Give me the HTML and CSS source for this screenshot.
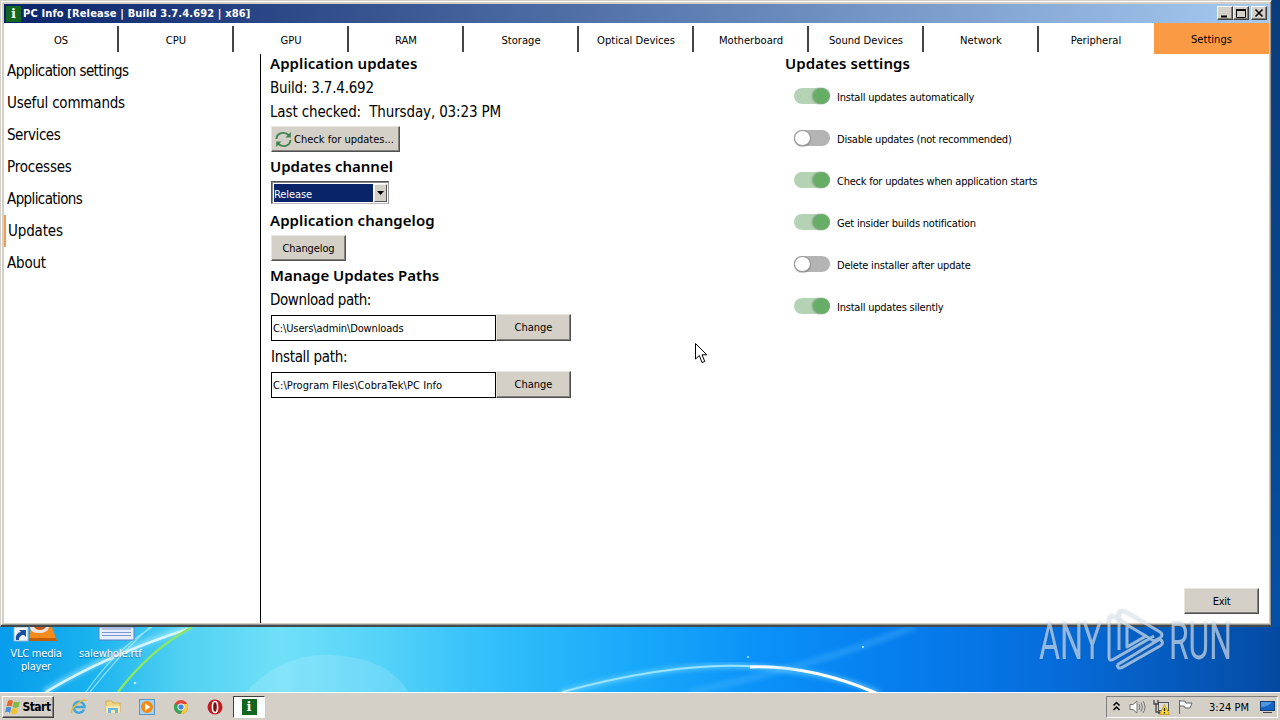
FILE: index.html
```html
<!DOCTYPE html>
<html lang="en">
<head>
<meta charset="utf-8">
<title>PC Info</title>
<link rel="stylesheet" href="styles.css">
</head>
<body>
<div class="desktop">
  <svg class="wallpaper" viewBox="0 0 1280 692" width="1280" height="692">
    <defs>
      <linearGradient id="sky" gradientUnits="userSpaceOnUse" x1="0" y1="0" x2="1280" y2="0">
        <stop offset="0" stop-color="#079cec"/><stop offset=".07" stop-color="#19b2ef"/><stop offset=".14" stop-color="#50d0f2"/><stop offset=".22" stop-color="#70e0f8"/><stop offset=".3" stop-color="#54d2f8"/><stop offset=".38" stop-color="#34c0fa"/><stop offset=".5" stop-color="#18a8fa"/><stop offset=".6" stop-color="#0a90f8"/><stop offset=".7" stop-color="#067eee"/><stop offset=".82" stop-color="#066ddc"/><stop offset="1" stop-color="#044aa2"/>
      </linearGradient>
      <linearGradient id="edge" x1="0" y1="0" x2="0" y2="1"><stop offset="0" stop-color="#0a3c7a"/><stop offset=".6" stop-color="#074690"/><stop offset="1" stop-color="#0450a8"/></linearGradient>
      <filter id="soft"><feGaussianBlur stdDeviation="2"/></filter>
      <filter id="fine"><feGaussianBlur stdDeviation=".5"/></filter>
    </defs>
    <rect width="1280" height="692" fill="url(#sky)"/>
    <rect x="1271" width="9" height="627" fill="url(#edge)"/>
    <path d="M246 692C270 665 300 655 325 655S390 660 408 692Z" fill="#fff" opacity=".14"/>
    <g fill="none">
      <path d="M44 692Q110 652 190 627" stroke="#bff0ff" stroke-width="6" opacity=".5" filter="url(#soft)"/>
      <path d="M46 692Q105 656 188 629" stroke="#e2faff" stroke-width="2.5" opacity=".9" filter="url(#fine)"/>
      <path d="M86 692Q115 650 152 627M90 692Q120 654 150 627" stroke="#c9f6ff" stroke-width="1.3" opacity=".6"/>
      <path d="M118 692Q150 650 192 627" stroke="#8ce860" stroke-width="2.4" filter="url(#fine)"/>
      <path d="M560 693Q680 660 760 667T880 694" stroke="#7fdcff" stroke-width="6" opacity=".5" filter="url(#soft)"/>
      <path d="M562 692Q680 660 760 667" stroke="#9be4ff" stroke-width="2" filter="url(#fine)"/>
      <path d="M750 667Q810 665 876 693" stroke="#fff" stroke-width="3" filter="url(#fine)"/>
      <path d="M690 692Q820 665 915 626" stroke="#58c0ff" stroke-width="7" opacity=".3" filter="url(#soft)"/>
    </g>
    <g fill="#b9ecff"><circle cx="748" cy="657" r=".9"/><circle cx="863" cy="647" r="1.1"/><circle cx="135" cy="683" r="1.3"/></g>
  </svg>

  <div class="shortcut shortcut-vlc">
    <svg width="46" height="20" viewBox="0 0 46 20">
      <path d="M18 0H39L44 14H16Z" fill="#f28a1c"/><path d="M16 11H43L44 14H16Z" fill="#c25e08"/><path d="M17 0H36Q35 6 26 6T17 0Z" fill="#efe4dc"/><path d="M21 0H33Q31 3 27 3T21 0Z" fill="#c8551c"/>
      <rect x="1" y="0" width="14" height="14" fill="#f4f8fc" stroke="#98b6d0"/><path d="M3 13C2 8 5 5 8 5L6 3H13V10L11 8C8 8 6 10 6 13Z" fill="#1c4f9c"/>
    </svg>
    <span>VLC media<br>player</span>
  </div>
  <div class="shortcut shortcut-rtf">
    <svg width="38" height="20" viewBox="0 0 38 20"><path d="M1 0H36V13H1Z" fill="#e6eefb" stroke="#5b7fc0"/><path d="M4 2H33M4 5.500H33M4 8.500H33" stroke="#7a97cf"/></svg>
    <span>salewhole.rtf</span>
  </div>

  <div class="window">
    <div class="titlebar">
      <span class="app-icon">i</span>
      <span class="title">PC Info [Release | Build 3.7.4.692 | x86]</span>
      <span class="caption"><svg width="15" height="13"><path d="M3 9.500H9" stroke="#000" stroke-width="2"/></svg></span>
      <span class="caption"><svg width="15" height="13"><path d="M2.500 2.500H11.500V10.500H2.500ZM2 2.500H12" fill="none" stroke="#000"/><path d="M2 3H12" stroke="#000" stroke-width="2"/></svg></span>
      <span class="caption caption-close"><svg width="15" height="13"><path d="M3.500 2.500L10.500 9.500M10.500 2.500L3.500 9.500" stroke="#000" stroke-width="1.600"/></svg></span>
    </div>
    <nav class="tabs">
      <span class="tab">OS</span><span class="tab">CPU</span><span class="tab">GPU</span><span class="tab">RAM</span><span class="tab">Storage</span><span class="tab">Optical Devices</span><span class="tab">Motherboard</span><span class="tab">Sound Devices</span><span class="tab">Network</span><span class="tab">Peripheral</span><span class="tab active">Settings</span>
    </nav>
    <div class="body">
      <ul class="sidebar">
        <li class="tight">Application settings</li><li class="loose">Useful commands</li><li>Services</li><li class="loose">Processes</li><li class="tight">Applications</li><li class="current">Updates</li><li class="loose">About</li>
      </ul>
      <main class="updates">
        <h2 class="first">Application updates</h2>
        <p>Build: 3.7.4.692</p>
        <p class="checked">Last checked:&nbsp; Thursday, 03:23 PM</p>
        <button class="btn check"><svg width="17" height="17" viewBox="0 0 17 17"><g fill="none" stroke="#3f8450" stroke-width="1.900"><path d="M1.500 8C1.500 1.500 10 0 14 4.500"/><path d="M15.500 9C15 15.500 7 17 3 12.500"/></g><path d="M15.800 1V6.500H10.500ZM1.200 16V10.500H6.500Z" fill="#3f8450"/></svg>Check for updates...</button>
        <h2>Updates channel</h2>
        <div class="select"><span class="value">Release</span><span class="drop"><svg width="7" height="4"><path d="M0 0H7L3.500 4Z"/></svg></span></div>
        <h2 class="changelog-title">Application changelog</h2>
        <button class="btn changelog">Changelog</button>
        <h2 class="paths-title">Manage Updates Paths</h2>
        <p class="download">Download path:</p>
        <div class="path"><span class="field">C:\Users\admin\Downloads</span><button class="btn change">Change</button></div>
        <p class="install">Install path:</p>
        <div class="path"><span class="field field-program">C:\Program Files\CobraTek\PC Info</span><button class="btn change">Change</button></div>
      </main>
      <section class="options">
        <h2 class="first">Updates settings</h2>
        <div class="option"><i class="switch on"></i>Install updates automatically</div>
        <div class="option"><i class="switch"></i>Disable updates (not recommended)</div>
        <div class="option"><i class="switch on"></i>Check for updates when application starts</div>
        <div class="option"><i class="switch on"></i>Get insider builds notification</div>
        <div class="option"><i class="switch"></i>Delete installer after update</div>
        <div class="option"><i class="switch on"></i>Install updates silently</div>
        <button class="btn exit">Exit</button>
      </section>
    </div>
  </div>
</div>

<div class="taskbar">
  <button class="btn start"><svg width="16" height="16" viewBox="0 0 16 16"><path d="M3 2Q5 0 8 2L6.500 7.500Q4 6 1.500 7.500Z" fill="#e8642c"/><path d="M9 2.500Q12 4 15 2.500L13.500 8Q10 9.500 7.500 8Z" fill="#7dbb42"/><path d="M1.300 8.500Q4 7 6.300 8.500L5 14Q3 12 0 13.500Z" fill="#4a8ed8"/><path d="M7.300 9Q10 10.500 13.200 9L12 14Q9 16 6 14.500Z" fill="#f5c130"/></svg>Start</button>
  <svg class="quick" width="18" height="18" viewBox="0 0 18 18"><path d="M14 11.500A5.500 5.500 0 1 1 14.500 9H5" fill="none" stroke="#3fa5df" stroke-width="2.500"/><path d="M2 15C-1 11 13 0 16.500 2.500" fill="none" stroke="#e8b93a" stroke-width="1.500"/></svg>
  <svg class="quick" width="18" height="18" viewBox="0 0 18 18"><path d="M2 3H8L9 5H16V14H2Z" fill="#f0d684" stroke="#d4ae4c"/><path d="M2 8H16V15H2Z" fill="#fae9a8"/><path d="M4 15V10H14V15H11V12H7V15Z" fill="#6ab6e2"/></svg>
  <svg class="quick" width="18" height="18" viewBox="0 0 18 18"><rect x="1.500" y="1.500" width="15" height="15" fill="#a7d3f2" stroke="#5598c8"/><circle cx="9" cy="9" r="6" fill="#f28a18"/><path d="M7 5.500L12.500 9L7 12.500Z" fill="#fff"/></svg>
  <svg class="quick" width="18" height="18" viewBox="0 0 18 18"><circle cx="9" cy="9" r="7" fill="#e44534"/><path d="M9 9L2.800 5.500A7 7 0 0 0 8.500 16L12 10.800Z" fill="#35a652"/><path d="M9 6H15.300A7 7 0 0 1 8.500 16L12 10.500Z" fill="#f8cc3c"/><circle cx="9" cy="9" r="3.200" fill="#4285e8" stroke="#fff"/></svg>
  <svg class="quick" width="18" height="18" viewBox="0 0 18 18"><circle cx="9" cy="9" r="7.500" fill="#c21820"/><ellipse cx="9" cy="9" rx="2.600" ry="5.500" fill="#7c0c12" stroke="#fff" stroke-width="1.600"/></svg>
  <span class="running"><span class="app-icon">i</span></span>
  <div class="tray">
    <svg width="9" height="12" viewBox="0 0 9 12"><path d="M1.500 4.500L4.500 1.500L7.500 4.500M1.500 9L4.500 6L7.500 9" fill="none" stroke="#000" stroke-width="1.500"/></svg>
    <svg class="sound" width="17" height="16" viewBox="0 0 17 16"><path d="M1 5.500H4L8 2V14L4 10.500H1Z" fill="#fff" stroke="#777"/><path d="M10 5Q12 8 10 11M12 3.500Q15 8 12 12.500M14 2Q18 8 14 14" fill="none" stroke="#777"/></svg>
    <svg class="net" width="17" height="16" viewBox="0 0 17 16"><rect x="5.500" y="3.500" width="10" height="8" fill="#dcdcdc" stroke="#555"/><path d="M1 1V5H5V1M3 5V13H7M5 14H11" fill="none" stroke="#444" stroke-width="1.300"/><path d="M11.500 5.500L16.500 15.500H6.500Z" fill="#ffd92e" stroke="#b58b00" stroke-width=".7"/><path d="M11.500 9V12M11.500 13V14.500" stroke="#222" stroke-width="1.300"/></svg>
    <svg class="flag" width="17" height="16" viewBox="0 0 17 16"><path d="M2.500 1V15M3 2H8L9 4H15L13 9H8L7 7H3" fill="#fff" stroke="#666"/></svg>
    <span class="clock">3:24 PM</span>
    <svg width="15" height="14" viewBox="0 0 15 14"><rect x=".5" y="1.500" width="14" height="9" fill="#1464c4" stroke="#163c70"/><path d="M1 7Q8 7 12 2H1Z" fill="#5098e0"/><path d="M3 12.500H12" stroke="#444"/></svg>
  </div>
</div>

<svg class="watermark" width="220" height="80" viewBox="0 0 220 80">
  <g class="mark">
    <text x="3" y="54" textLength="63" lengthAdjust="spacingAndGlyphs">ANY</text>
    <text x="133" y="54" textLength="63" lengthAdjust="spacingAndGlyphs">RUN</text>
    <path d="M73 52V14Q74 9 79 12L83 14V45M83 14V8Q85 4 90 7L124 27Q128 30 124 33L118 36L83 15M73 52Q73 57 78 54L118 31M81 60Q82 65 87 62L124 41Q129 38 124 34L81 60M91 20L110 31L91 42Z"/>
  </g>
</svg>
<svg class="cursor" width="13" height="21" viewBox="0 0 13 21"><path d="M.500 .500V16L4.300 12.500L7 19.500L9.800 18.500L7 11.800H11.800Z" fill="#fff" stroke="#000"/></svg>
</body>
</html>
```

FILE: styles.css
```css
*, ::before { box-sizing: border-box; }
body { margin: 0; width: 1280px; height: 720px; overflow: hidden; position: relative; display: flex; flex-direction: column; font: 11px "DejaVu Sans Condensed", "DejaVu Sans", sans-serif; font-stretch: condensed; color: #000; }
svg { display: block; flex: none; }
.desktop { position: relative; height: 692px; flex: none; }
.wallpaper { position: absolute; left: 0; top: 0; }

.shortcut { position: absolute; top: 627px; display: flex; flex-direction: column; align-items: center; color: #fff; text-align: center; line-height: 13px; white-space: nowrap; text-shadow: 0 1px 1px rgba(0, 40, 90, .5); }
.shortcut-vlc { left: 11px; width: 50px; letter-spacing: -.2px; }
.shortcut-rtf { left: 78px; width: 66px; padding-left: 11px; align-items: flex-start; }
.shortcut-rtf svg { margin-left: 9px; }
.shortcut-rtf span { margin-left: -10px; letter-spacing: -.1px; }
.shortcut svg { height: 20px; }

.window { position: relative; width: 1272px; height: 627px; padding: 3px 2px 2px 3px; background: #d4d0c8; border: 1px solid #d4d0c8; border-right-color: #404040; border-bottom: 2px solid #404a50; box-shadow: inset 1px 1px #fff, inset -1px -1px #98948c; display: flex; flex-direction: column; }
.titlebar { height: 19px; flex: none; width: 1265px; display: flex; align-items: center; padding: 0 2px 0 2px; background: linear-gradient(90deg, #0a246a, #a6caf0); }
.app-icon { width: 15px; height: 16px; background: #12661f; color: #fff; font: bold 13px/16px "DejaVu Serif", serif; text-align: center; flex: none; }
.title { flex: 1; margin-left: 2px; color: #fff; font-weight: bold; font-size: 11px; letter-spacing: .14px; white-space: nowrap; }
.caption { width: 16px; height: 14px; margin-top: -1px; background: #d4d0c8; border: 1px solid; border-color: #fff #404040 #404040 #fff; box-shadow: inset -1px -1px #808080; }
.caption-close { margin-left: 2px; }

.tabs { display: flex; height: 31px; flex: none; width: 1265px; background: #fff; }
.tab { width: 115px; flex: none; border-right: 2px solid #444; background: #fff; margin: 3px 0 2px; padding-left: 1px; text-align: center; font: 10px/30px "DejaVu Sans", sans-serif; }
.tab:nth-child(10) { border-color: #fff; }
.tab.active { margin: 0; padding: 0; border: 0; line-height: 34px; background: #fb9a44; }

.body { display: flex; flex: 1; background: #fff; width: 1265px; }
.sidebar { width: 257px; margin: 0; padding: 1px 0 0; list-style: none; border-right: 1px solid #000; }
.sidebar li { height: 32px; padding-left: 3px; line-height: 33px; font-size: 15px; letter-spacing: -.45px; }
.sidebar .tight { letter-spacing: -.6px; }
.sidebar .loose { letter-spacing: -.2px; }
.sidebar .current { border-left: 2px solid #f59a50; padding-left: 2px; letter-spacing: -.15px; }
.updates { width: 525px; padding-left: 10px; display: flex; flex-direction: column; align-items: flex-start; }
h2 { height: 24px; margin: 3px 0 0 -1px; font: 600 15px/22px "Noto Sans", sans-serif; white-space: nowrap; }
h2.first { height: 22px; line-height: 18px; margin-top: 0; letter-spacing: .07px; }
p { height: 24px; margin: 0 0 0 -1px; font-size: 15px; line-height: 24px; letter-spacing: -.2px; white-space: nowrap; }
.checked { letter-spacing: -.14px; }
.download { letter-spacing: -.4px; }
.btn { height: 26px; padding: 0; border: 1px solid; border-color: #e8e5df #505050 #505050 #e8e5df; box-shadow: inset -1px -1px #85827c; border-radius: 0; background: #d4d0c8; color: #000; font: inherit; font-stretch: condensed; display: flex; align-items: center; justify-content: center; flex: none; white-space: nowrap; }
.check { width: 129px; margin-top: 2px; padding-right: 2px; gap: 2px; }
.select { width: 118px; height: 23px; margin-top: 2px; border: 1px solid; border-color: #555 #999 #bbb #555; box-shadow: inset 1px 1px #888; padding: 2px 1px 1px 2px; display: flex; }
.value { width: 99px; background: #0a246a; color: #fff; line-height: 21px; letter-spacing: -.1px; }
.drop { flex: 1; margin-left: 1px; background: #d4d0c8; border: 1px solid; border-color: #f4f2ee #555 #555 #f4f2ee; display: flex; align-items: center; justify-content: center; }
.changelog-title { margin-top: 5px; letter-spacing: .07px; }
.changelog { width: 75px; margin-top: 2px; letter-spacing: -.1px; }
.path { display: flex; align-items: center; margin-top: 2px; height: 27px; }
.field { width: 225px; height: 26px; border: 1px solid #000; padding-left: 1px; line-height: 25px; white-space: nowrap; letter-spacing: -.12px; }
.field-program { letter-spacing: .07px; }
.change { width: 75px; height: 27px; }
.install { margin: 4px 0 0; letter-spacing: -.3px; }

.options { flex: 1; display: flex; flex-direction: column; align-items: flex-start; }
.option { height: 42px; padding-left: 8px; display: flex; align-items: center; white-space: nowrap; letter-spacing: -.22px; }
.switch { width: 36px; height: 16px; margin: 0 7px 2px 0; border-radius: 8px; background: #b4b4b4; display: flex; }
.switch::before { content: ""; width: 17px; height: 16px; border-radius: 50%; background: #fff; border: 1px solid #999; box-shadow: 0 1px 1px rgba(0,0,0,.25); }
.switch.on { background: #b4d3b4; justify-content: flex-end; }
.switch.on::before { background: #66ae66; border: 1px solid #78a978; box-shadow: -1px 0 2px #76a076; }
.exit { width: 75px; align-self: flex-end; margin: auto 10px 9px 0; letter-spacing: -.3px; }

.taskbar { height: 28px; flex: none; border-top: 1px solid #fff; background: #d4d0c8; display: flex; align-items: center; padding: 1px 2px 0; }
.start { width: 52px; height: 22px; gap: 1px; font: bold 12px "DejaVu Sans Condensed", "DejaVu Sans", sans-serif; letter-spacing: -.5px; border-color: #fff #404040 #404040 #fff; }
.quick { margin-left: 16px; }
.running { width: 32px; height: 22px; margin-left: 9px; border: 1px solid; border-color: #404040 #fff #fff #404040; background: #fff; display: flex; align-items: center; justify-content: center; }
.tray { margin-left: auto; width: 172px; height: 22px; display: flex; align-items: center; padding: 0 2px 0 5px; border: 1px solid; border-color: #808080 #fff #fff #808080; }
.sound { margin-left: 8px; }
.net { margin-left: 7px; }
.flag { margin-left: 7px; }
.clock { flex: 1; padding-left: 4px; text-align: center; white-space: nowrap; }

.watermark { position: absolute; left: 1036px; top: 605px; filter: drop-shadow(0 0 1px rgba(70, 90, 110, .5)); }
.mark { opacity: .6; }
.mark text { font: 400 51px Roboto, sans-serif; fill: #e8f1fa; }
.mark path { fill: none; stroke: #eef5fc; stroke-width: 3; stroke-linejoin: round; }
.cursor { position: absolute; left: 695px; top: 343px; }
```
